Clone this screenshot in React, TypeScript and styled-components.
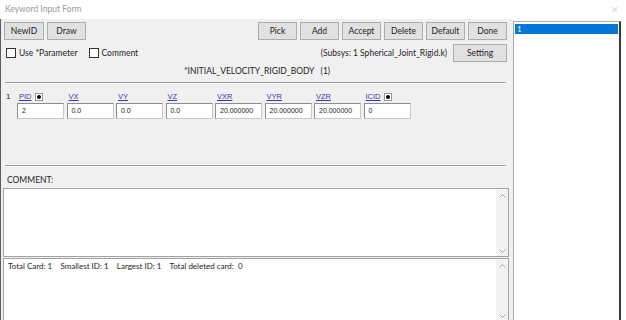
import React from "react";
import styled, { createGlobalStyle } from "styled-components";

const UI_FONT = `"Lato", "Open Sans", sans-serif`;
const FIELD_FONT = `"Liberation Sans", Arial, sans-serif`;

const GlobalStyle = createGlobalStyle`
  html, body { margin: 0; padding: 0; background: #ffffff; }
  body { width: 626px; height: 320px; overflow: hidden; }
  * { box-sizing: border-box; }
`;

const Window = styled.div`
  width: 626px;
  height: 320px;
  display: flex;
  flex-direction: column;
  font-family: ${UI_FONT};
  font-size: 8.5px;
  color: #1e1e1e;
  overflow: hidden;
`;

const TitleBar = styled.div`
  height: 19px;
  flex: none;
  display: flex;
  align-items: center;
  justify-content: space-between;
  padding: 0 7px 1px 5px;
  background: #ffffff;
  color: #9b9b9b;
`;

const CloseGlyph = styled.span`
  color: #d4d4d4;
  font-size: 9px;
`;

const Main = styled.div`
  flex: 1;
  display: flex;
  min-height: 0;
`;

const FormPane = styled.div`
  width: 513px;
  flex: none;
  display: flex;
  flex-direction: column;
  background: #f0f0f0;
  border-left: 1px solid #5c5c5c;
`;

const Toolbar = styled.div`
  margin: 3px 6px 0 3px;
  height: 18px;
  display: flex;
  justify-content: space-between;
`;

const ButtonGroup = styled.div`
  display: flex;
  gap: 3px;
`;

const Button = styled.button<{ $w?: number }>`
  width: ${(p) => p.$w ?? 39}px;
  height: 18px;
  padding: 0;
  margin: 0;
  background: #e1e1e1;
  border: 1px solid #adadad;
  font-family: ${UI_FONT};
  font-size: 8.5px;
  color: #1e1e1e;
  line-height: 16px;
`;

const OptionsRow = styled.div`
  margin: 4px 6px 0 5px;
  height: 17px;
  display: flex;
  align-items: center;
`;

const Check = styled.label<{ $gap?: number }>`
  display: flex;
  align-items: center;
  gap: 3px;
  margin-right: ${(p) => p.$gap ?? 0}px;
`;

const CheckBox = styled.span`
  width: 10px;
  height: 10px;
  border: 1px solid #333333;
  background: #ffffff;
`;

const Spacer = styled.div`
  flex: 1;
`;

const Subsys = styled.span`
  margin-right: 6px;
`;

const CardTitle = styled.div`
  margin-top: 3px;
  height: 14px;
  line-height: 14px;
  text-align: center;
  white-space: pre;
`;

const Divider = styled.div<{ $top: number }>`
  margin: ${(p) => p.$top}px 7px 0 4px;
  height: 2px;
  border-top: 1px solid #a0a0a0;
  border-bottom: 1px solid #ffffff;
  flex: none;
`;

const FieldBlock = styled.div`
  margin: 8px 0 0 5px;
  display: flex;
  font-family: ${FIELD_FONT};
  font-size: 7px;
`;

const RowNum = styled.div`
  width: 11px;
  height: 10px;
  line-height: 10px;
  font-size: 8px;
`;

const FieldGrid = styled.div`
  display: grid;
  grid-template-columns: repeat(8, 47px);
  grid-template-rows: 10px 16px;
  column-gap: 2.5px;
  row-gap: 1px;
`;

const FieldLabel = styled.div`
  display: flex;
  align-items: center;
  gap: 3px;
  padding-left: 2px;
  line-height: 10px;
  font-size: 7.5px;
`;

const LabelLink = styled.span`
  color: #3838b0;
  text-decoration: underline;
`;

const PickBox = styled.span`
  width: 8px;
  height: 8px;
  border: 1px solid #9a9a9a;
  background: #ffffff;
  display: flex;
  align-items: center;
  justify-content: center;
  &::after {
    content: "";
    width: 4px;
    height: 4px;
    border-radius: 50%;
    background: #000;
  }
`;

const FieldInput = styled.div`
  height: 16px;
  background: #ffffff;
  border: 1px solid #8e8e8e;
  border-right-color: #c8c8c8;
  border-bottom-color: #c8c8c8;
  padding-left: 4px;
  line-height: 14px;
  color: #222;
`;

const CommentLabel = styled.div`
  margin: 7px 0 0 6px;
  height: 12px;
  line-height: 12px;
`;

const TextBox = styled.div<{ $h: number; $top: number }>`
  margin: ${(p) => p.$top}px 4px 0 2px;
  height: ${(p) => p.$h}px;
  flex: none;
  display: flex;
  background: #ffffff;
  border: 1px solid #a3a3a3;
`;

const TextArea = styled.div`
  flex: 1;
  padding: 2px 0 0 4px;
  line-height: 11px;
  font-size: 8px;
  white-space: pre;
`;

const ScrollBar = styled.div`
  width: 12px;
  display: flex;
  flex-direction: column;
  justify-content: space-between;
  align-items: center;
  padding: 5px 0 3px;
  background: #f3f3f3;
`;

const ListPane = styled.div`
  width: 108px;
  flex: none;
  margin-top: 2px;
  height: 320px;
  padding: 1px;
  background: #ffffff;
  border: 1px solid #a8a8a8;
  border-right: 2px solid #3a3a3a;
`;

const ListItem = styled.div<{ $selected?: boolean }>`
  height: 10px;
  margin-top: 1px;
  line-height: 10px;
  padding-left: 2px;
  font-size: 8px;
  background: ${(p) => (p.$selected ? "#0078d7" : "transparent")};
  color: ${(p) => (p.$selected ? "#ffffff" : "#000000")};
`;

const Chevron = ({ up }: { up?: boolean }) => (
  <svg width="7" height="4" viewBox="0 0 7 4">
    <polyline
      points={up ? "0.5,3.5 3.5,0.5 6.5,3.5" : "0.5,0.5 3.5,3.5 6.5,0.5"}
      fill="none"
      stroke="#a8a8a8"
      strokeWidth="1"
    />
  </svg>
);

const fields = [
  { label: "PID", value: "2", pick: true },
  { label: "VX", value: "0.0" },
  { label: "VY", value: "0.0" },
  { label: "VZ", value: "0.0" },
  { label: "VXR", value: "20.000000" },
  { label: "VYR", value: "20.000000" },
  { label: "VZR", value: "20.000000" },
  { label: "ICID", value: "0", pick: true },
];

export default function App() {
  return (
    <>
      <GlobalStyle />
      <Window>
        <TitleBar>
          <span>Keyword Input Form</span>
          <CloseGlyph>✕</CloseGlyph>
        </TitleBar>
        <Main>
          <FormPane>
            <Toolbar>
              <ButtonGroup>
                <Button $w={40}>NewID</Button>
                <Button>Draw</Button>
              </ButtonGroup>
              <ButtonGroup>
                {["Pick", "Add", "Accept", "Delete", "Default", "Done"].map((b) => (
                  <Button key={b}>{b}</Button>
                ))}
              </ButtonGroup>
            </Toolbar>
            <OptionsRow>
              <Check $gap={11}>
                <CheckBox />
                Use *Parameter
              </Check>
              <Check>
                <CheckBox />
                Comment
              </Check>
              <Spacer />
              <Subsys>(Subsys: 1 Spherical_Joint_Rigid.k)</Subsys>
              <Button $w={54}>Setting</Button>
            </OptionsRow>
            <CardTitle>{"*INITIAL_VELOCITY_RIGID_BODY   (1)"}</CardTitle>
            <Divider $top={4} />
            <FieldBlock>
              <RowNum>1</RowNum>
              <FieldGrid>
                {fields.map((f) => (
                  <FieldLabel key={f.label}>
                    <LabelLink>{f.label}</LabelLink>
                    {f.pick && <PickBox />}
                  </FieldLabel>
                ))}
                {fields.map((f) => (
                  <FieldInput key={f.label + "-v"}>{f.value}</FieldInput>
                ))}
              </FieldGrid>
            </FieldBlock>
            <Divider $top={46} />
            <CommentLabel>COMMENT:</CommentLabel>
            <TextBox $top={2} $h={69}>
              <TextArea />
              <ScrollBar>
                <Chevron up />
                <Chevron />
              </ScrollBar>
            </TextBox>
            <TextBox $top={1} $h={64}>
              <TextArea>{"Total Card: 1    Smallest ID: 1    Largest ID: 1    Total deleted card:  0"}</TextArea>
              <ScrollBar>
                <Chevron up />
                <Chevron />
              </ScrollBar>
            </TextBox>
          </FormPane>
          <ListPane>
            <ListItem $selected>1</ListItem>
          </ListPane>
        </Main>
      </Window>
    </>
  );
}
